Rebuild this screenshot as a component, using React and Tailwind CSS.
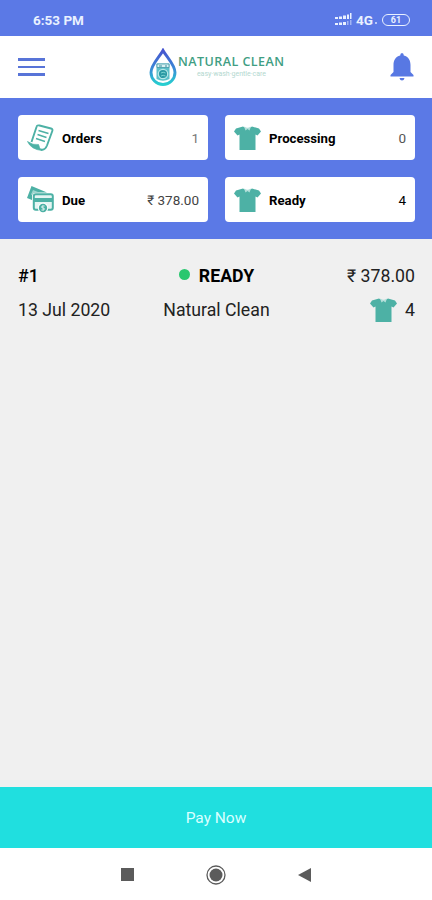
import React from 'react';

const Shirt = () => (
    <svg width="27" height="24" viewBox="0 0 27 24" className="shrink-0">
        <path d="M9 0.500L2 2.500L0 5.500L3.500 9.500L5.500 8.500V24H21.500V8.500L23.500 9.500L27 5.500L25 2.500L18 .5Q13.500 4 9 .5Z" fill="#4db1a5" />
        <path d="M10 .5L11.500 4.500L13.500 3L15.500 4.500L17 .5Q13.500 3 10 .5Z" fill="#b4dfda" />
    </svg>
);

const OrdersIcon = () => (
    <svg width="27" height="27" viewBox="0 0 27 27" fill="none" stroke="#4db1a5" className="shrink-0">
        <path d="M4.500 18L9.500 3Q10 .8 12.500 1.500L24 4.500Q26 5 25.300 7L20 21.500Q18 26.500 14 25.500" strokeWidth="1.900" strokeLinejoin="round" />
        <path d="M.5 17.500Q6 21.500 11.500 20.500Q12 24 15 26.500Q4 25.500 .5 17.500Z" fill="#4db1a5" strokeWidth=".7" />
        <path d="M11.500 6.500L21.500 9.500M10.500 10.500L19.500 13.500M9 14.500L18 17.500" strokeWidth="1.500" />
    </svg>
);

const DueIcon = () => (
    <svg width="27" height="27" viewBox="0 0 27 27" className="shrink-0">
        <path d="M4.500 0L20 6.500H8Q5 6.500 5 10V14L0 12Z" fill="#4db1a5" />
        <path d="M6 4L11 6Q7 6 5 9L4 8.500Z" fill="#9fd5ce" />
        <rect x="6.800" y="8.300" width="19" height="15.400" rx="2" fill="#e6f5f3" stroke="#4db1a5" strokeWidth="2" />
        <path d="M7 12H25.500V16H7Z" fill="#4db1a5" />
        <circle cx="16" cy="22" r="5.200" fill="#fff" />
        <circle cx="16" cy="22" r="4.200" fill="#4db1a5" />
        <path d="M17.500 20H15V22H17V24H14.500" fill="none" stroke="#fff" strokeWidth=".9" />
    </svg>
);

const Logo = () => (
    <svg width="28" height="38" viewBox="0 0 28 38" className="shrink-0">
        <defs>
            <linearGradient id="drop" x1="0" y1="0" x2="0" y2="1">
                <stop offset="0" stopColor="#4755cf" />
                <stop offset=".5" stopColor="#3b86d6" />
                <stop offset="1" stopColor="#27cfd0" />
            </linearGradient>
        </defs>
        <path d="M14 2.500C10.500 9 2 17 2 24.500A12 12 0 0 0 26 24.500C26 17 17.500 9 14 2.500Z" fill="none" stroke="url(#drop)" strokeWidth="2.900" />
        <path d="M7.500 15.500H20.500V31Q14 34.500 7.500 31Z" fill="#5cc0c9" />
        <path d="M8 16H20V19.500H8Z" fill="#d9f1f2" stroke="#388e9e" strokeWidth=".7" />
        <path d="M10 18H13M16 18H18" stroke="#388e9e" />
        <circle cx="14" cy="26" r="4.700" fill="#2b99a4" stroke="#b8e8e8" strokeWidth="1.200" />
        <path d="M12 25Q14 23.500 16.500 25M12 28Q14 26.500 16.500 28" fill="none" stroke="#7bd3d1" />
    </svg>
);

const stats = [
    { label: 'Orders', value: '1', icon: <OrdersIcon />, color: 'text-[#777]' },
    { label: 'Processing', value: '0', icon: <Shirt />, color: 'text-[#555]' },
    { label: 'Due', value: '₹ 378.00', icon: <DueIcon />, color: 'text-[#444]' },
    { label: 'Ready', value: '4', icon: <Shirt />, color: 'text-black' },
];

const StatusBar = () => (
    <div className="h-9 shrink-0 bg-[#5b79e6] flex items-center justify-between pl-[33px] pr-[22px] pt-1 text-[#e9f1ff]">
        <span className="text-[13.5px] font-bold">6:53 PM</span>
        <div className="flex items-center">
            <svg width="17" height="14" viewBox="0 0 17 14" fill="currentColor">
                <path d="M0 4H3V6H0ZM4 3.500H7V6H4ZM8 2.500H11V6H8ZM12 1.500H14V6H12ZM15 0H16.500V6H15ZM0 10H3V12H0ZM4 9.500H7V12H4ZM8 9H11V12H8Z" />
                <path d="M12 8H13.500V12H12ZM15 7H16.500V12H15Z" opacity=".5" />
            </svg>
            <span className="ml-1 text-[13.5px] font-bold">4G</span>
            <span className="ml-[2px] mt-1.5 w-0.5 h-0.5 bg-[#b8c8f8]"></span>
            <span className="ml-[5px] w-7 h-3 rounded-full border border-current text-[9px] leading-none font-bold flex items-center justify-center">61</span>
        </div>
    </div>
);

const Header = () => (
    <div className="h-[62px] shrink-0 bg-white flex items-center justify-between px-[18px]">
        <div className="w-[27px] flex flex-col gap-[5px]">
            <div className="h-[2.5px] bg-[#5874d8]"></div>
            <div className="h-[2.5px] bg-[#5874d8]"></div>
            <div className="h-[2.5px] bg-[#5874d8]"></div>
        </div>
        <div className="flex items-center mr-px">
            <Logo />
            <div className="ml-px flex flex-col items-center">
                <svg width="107" height="16" viewBox="0 0 107 16">
                    <text x="0" y="12" textLength="106" lengthAdjust="spacing" fontSize="12.500" fontWeight="600" fill="#3f9e83" className="font-['Open_Sans',sans-serif]">NATURAL CLEAN</text>
                </svg>
                <span className="text-[7px] leading-[8px] mb-[3px] text-[#b3d8cf]">easy·wash·gentle·care</span>
            </div>
        </div>
        <svg width="24" height="28" viewBox="0 0 24 28" fill="#5878e3">
            <path d="M12 0Q13.800 0 13.800 2.500C18.500 3.500 20.500 7.500 20.500 12V19L23.500 22V23.500H.5V22L3.500 19V12C3.500 7.500 5.500 3.500 10.200 2.500Q10.200 0 12 0ZM9.500 25H14.500Q14 27.500 12 27.500Q10 27.500 9.500 25Z" />
        </svg>
    </div>
);

const App = () => {
    return (
        <div className="w-full h-[900px] flex flex-col bg-[#f0f0f0] font-['Roboto',sans-serif] text-black">
            <StatusBar />
            <Header />
            <div className="h-[141px] shrink-0 bg-[#5b79e6] pl-[18px] pr-[17px] pt-[17px] grid grid-cols-2 auto-rows-[45px] gap-x-[17px] gap-y-[17px]">
                {stats.map((s) => (
                    <div key={s.label} className="bg-white rounded px-[9px] flex items-center">
                        {s.icon}
                        <span className="ml-2 mt-[2px] text-[13.2px] font-bold">{s.label}</span>
                        <span className={'ml-auto mt-px text-[13.5px] ' + s.color}>{s.value}</span>
                    </div>
                ))}
            </div>
            <div className="flex-1 pl-[18px] pr-[17px] pt-[26px] text-[17.7px] leading-[22px]">
                <div className="grid grid-cols-3 items-center whitespace-nowrap">
                    <span className="font-medium">#1</span>
                    <span className="flex items-center justify-center gap-[9px] font-bold text-[17.7px]">
                        <span className="w-[11px] h-[11px] mb-[3px] rounded-full bg-[#29c76f]"></span>
                        READY
                    </span>
                    <span className="text-right text-[#222]">₹ 378.00</span>
                </div>
                <div className="mt-[11px] grid grid-cols-3 items-center whitespace-nowrap text-[#222]">
                    <span>13 Jul 2020</span>
                    <span className="text-center">Natural Clean</span>
                    <span className="flex items-center justify-end gap-[8px]"><Shirt />4</span>
                </div>
            </div>
            <button className="h-[61px] shrink-0 bg-[#20dfdf] text-[#d9ffff] text-[15.5px] pt-[3px]">Pay Now</button>
            <div className="h-[52px] shrink-0 bg-white flex items-center justify-center gap-[72px] pt-px">
                <div className="w-[13px] h-[13px] bg-[#5b5b5b]"></div>
                <svg width="20" height="20" viewBox="0 0 20 20">
                    <circle cx="10" cy="10" r="9" fill="none" stroke="#5b5b5b" strokeWidth="1.300" />
                    <circle cx="10" cy="10" r="6.500" fill="#5b5b5b" />
                </svg>
                <svg width="13" height="14" viewBox="0 0 13 14">
                    <path d="M0 7L13 0V14Z" fill="#5b5b5b" />
                </svg>
            </div>
        </div>
    );
};

export default App;
